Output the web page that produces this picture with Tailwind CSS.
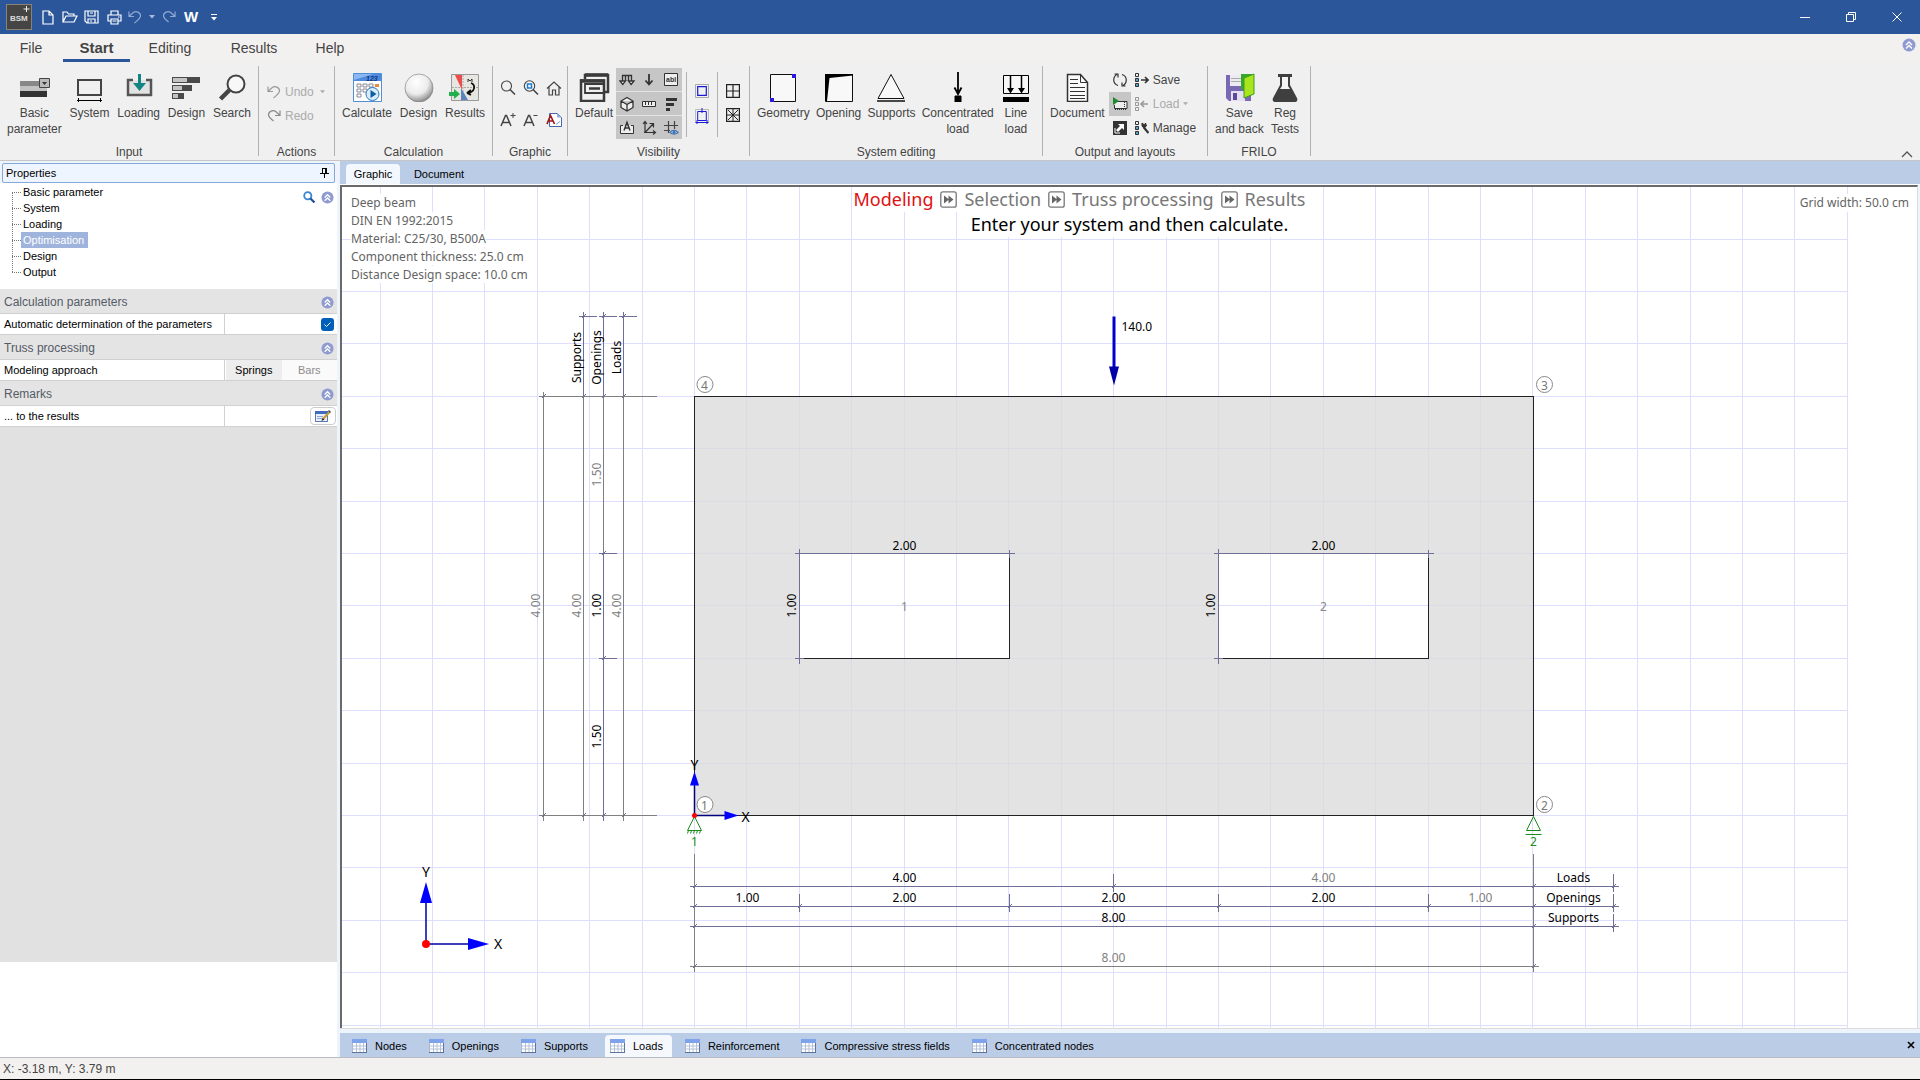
<!DOCTYPE html>
<html lang="en">
<head>
  <meta charset="UTF-8">
  <title>BSM+ Deep beam</title>
  <meta name="viewport" content="width=device-width, initial-scale=1.0">
  <script src="https://cdn.jsdelivr.net/npm/@tailwindcss/browser@4"></script>
</head>
<body class="h-screen flex flex-col overflow-hidden bg-[#f0f0f0] font-['Liberation_Sans',sans-serif] text-xs leading-4 text-[#444] cursor-default">

  <!-- shared icons -->
  <svg class="hidden">
    <symbol id="collapse" viewBox="0 0 14 14"><circle cx="7" cy="7" r="6.500" fill="#8f9bd0"/><path d="M4 7l3-3 3 3M4 10.500l3-3 3 3" fill="none" stroke="#fff" stroke-width="1.300"/></symbol>
    <symbol id="undo" viewBox="0 0 14 14"><path d="M1 1.500v5h5M1.500 6L5 2.800c3-2.300 7.500-.5 7.500 3 0 2.500-2 3.500-6 7.200" fill="none" stroke="currentColor" stroke-width="1.200"/></symbol>
    <symbol id="redo" viewBox="0 0 14 14"><path d="M13 1.500v5H8M12.500 6L9 2.800c-3-2.300-7.500-.5-7.500 3 0 2.500 2 3.500 5 6.200" fill="none" stroke="currentColor" stroke-width="1.200"/></symbol>
    <symbol id="caret" viewBox="0 0 6 4"><path d="M0 0h6L3 3.500z" fill="currentColor"/></symbol>
    <symbol id="grid-icon" viewBox="0 0 15 14"><path d="M.5.5h14v13H.5z" fill="#fff" stroke="#a9b8d4"/><path d="M0 0h15v4H0z" fill="#7fa3ea"/><path d="M1 7h13M1 10h13M4.500 4v9M8 4v9M11.500 4v9" stroke="#b4c1d8" fill="none"/><path d="M0 13.500h15M14.500 4v10" stroke="#5f749c"/></symbol>
    <symbol id="next-step" viewBox="0 0 17 17"><rect x=".8" y=".8" width="15.400" height="15.400" rx="2" fill="#fff" stroke="#777" stroke-width="1.300"/><path d="M4 4.500l5 4-5 4zM8.500 4.500l5 4-5 4z" fill="#666"/></symbol>
  </svg>

  <header>
    <div class="h-[34px] flex items-center bg-[#2b579a] text-white pl-[6px]">
      <svg class="w-[26px] h-[26px]" viewBox="0 0 26 26"><rect x=".5" y=".5" width="25" height="25" fill="#454545" stroke="#8a8378"/><text x="4" y="17" font-size="8" font-weight="bold" fill="#ddd">BSM</text><path d="M20.500 2v6M17.500 5h6" stroke="#eee"/></svg>
      <button class="ml-[10px]" aria-label="New"><svg class="w-3 h-[15px]" viewBox="0 0 12 15" fill="none" stroke="currentColor" stroke-width="1.200"><path d="M1 1h6l4 4v9H1zM7 1v4h4"/></svg></button>
      <button class="ml-2" aria-label="Open"><svg class="w-4 h-3" viewBox="0 0 16 12" fill="none" stroke="currentColor" stroke-width="1.200"><path d="M1 11V1h4l1.500 2H12v2M1 11l3-6h11l-3 6z"/></svg></button>
      <button class="ml-[6px]" aria-label="Save"><svg class="w-[15px] h-[14px]" viewBox="0 0 15 14" fill="none" stroke="currentColor" stroke-width="1.200"><path d="M1 1h13v12H3l-2-2zM4 1v5h7V1M4 13V9h7v4M6 3h3M6 11h2"/></svg></button>
      <button class="ml-2" aria-label="Print"><svg class="w-[15px] h-[15px]" viewBox="0 0 15 15" fill="none" stroke="currentColor" stroke-width="1.200"><path d="M4 5V1h7v4M4 11H1V5h13v6h-3M4 9h7v5H4zM5.500 11h4M11 7h1.500"/></svg></button>
      <button class="ml-[6px] text-[#8fa9d3]" aria-label="Undo"><svg class="w-[14px] h-[14px]"><use href="#undo"/></svg></button>
      <button class="ml-[7px] text-[#a9bcdc]" aria-label="Undo history"><svg class="w-[6px] h-1"><use href="#caret"/></svg></button>
      <button class="ml-[7px] text-[#8fa9d3]" aria-label="Redo"><svg class="w-[14px] h-[14px]"><use href="#redo"/></svg></button>
      <button class="ml-2 text-[15px] font-bold" aria-label="Word export">W</button>
      <button class="ml-[13px]" aria-label="Customize toolbar"><svg class="w-[6px] h-[7px]" viewBox="0 0 6 7"><path d="M0 .5h6" stroke="#fff"/><path d="M0 3h6L3 6.500z" fill="#fff"/></svg></button>
      <div class="ml-auto flex">
        <button class="w-[46px] h-[34px] flex items-center justify-center" aria-label="Minimize"><svg class="w-[10px] h-[10px]" viewBox="0 0 10 10"><path d="M0 5.500h10" stroke="#fff"/></svg></button>
        <button class="w-[46px] h-[34px] flex items-center justify-center" aria-label="Restore"><svg class="w-[10px] h-[10px]" viewBox="0 0 10 10" fill="none" stroke="#fff"><path d="M.5 2.500h7v7h-7zM2.500 2.500v-2h7v7h-2"/></svg></button>
        <button class="w-[46px] h-[34px] flex items-center justify-center" aria-label="Close"><svg class="w-[10px] h-[10px]" viewBox="0 0 10 10" stroke="#fff"><path d="M.5.500l9 9M9.500.500l-9 9"/></svg></button>
      </div>
    </div>

    <nav class="h-7 flex items-start bg-[#f3f1f0] text-sm pl-[5px] pr-1">
      <a href="#" class="w-[52px] h-7 leading-7 text-center">File</a>
      <a href="#" class="ml-[6px] w-[67px] h-7 leading-7 text-center text-[15px] font-bold border-b-3 border-[#2b579a]">Start</a>
      <a href="#" class="w-20 h-7 leading-7 text-center">Editing</a>
      <a href="#" class="w-[88px] h-7 leading-7 text-center">Results</a>
      <a href="#" class="w-[64px] h-7 leading-7 text-center">Help</a>
      <button class="ml-auto mt-1" aria-label="Info"><svg class="w-[14px] h-[14px]"><use href="#collapse"/></svg></button>
    </nav>

    <div class="h-[99px] flex border-b border-[#c6c6c6] bg-[#f0f0f0]">
      <!-- Input -->
      <section class="w-[258px] flex flex-col">
        <div class="flex-1 flex justify-between px-[7px] pt-2">
          <button class="flex flex-col items-center justify-start">
            <svg class="w-8 h-8 mb-[3px]" viewBox="0 0 32 32"><path d="M2 11h27v5H2z" fill="#888"/><path d="M2 16h27v5H2z" fill="#c2c2c2"/><path d="M2 21h27v6H2z" fill="#333"/><path d="M21.500 8.500h10v9h-10z" fill="#bbb" stroke="#444"/><path d="M24 12h5l-2.500 3z" fill="#333"/></svg>
            <span>Basic<br>parameter</span>
          </button>
          <button class="flex flex-col items-center justify-start">
            <svg class="w-8 h-8 mb-[3px]" viewBox="0 0 32 32" fill="none" stroke="#444"><path d="M5 10h23v15H5z" stroke-width="2"/><path d="M4 30.500h25M5.500 28v4M27.500 28v4" stroke="#000"/></svg>
            <span>System</span>
          </button>
          <button class="flex flex-col items-center justify-start">
            <svg class="w-8 h-8 mb-[3px]" viewBox="0 0 32 32"><path d="M10 10H5v15h23V10h-5" fill="#e2e2e2" stroke="#555" stroke-width="2.500"/><path d="M15 4h3v9h5l-6.500 8L10 13h5z" fill="#128484"/></svg>
            <span>Loading</span>
          </button>
          <button class="flex flex-col items-center justify-start">
            <svg class="w-8 h-8 mb-[3px]" viewBox="0 0 32 32"><path d="M2 7h28v6H2zM2 15h20v6H2zM2 23h12v6H2z" fill="#4a4a4a"/><path d="M3 8h14v4H3zM3 16h9v4H3zM3 24h5v4H3z" fill="#c4c4c4"/></svg>
            <span>Design</span>
          </button>
          <button class="flex flex-col items-center justify-start">
            <svg class="w-8 h-8 mb-[3px]" viewBox="0 0 32 32" fill="none" stroke="#444"><circle cx="20" cy="14" r="8.500" fill="#f8f8f8" stroke-width="2"/><path d="M4.500 29l9-9" stroke-width="4.500"/></svg>
            <span>Search</span>
          </button>
        </div>
        <h2 class="text-center">Input</h2>
      </section>
      <div class="w-px my-1 bg-[#b1b1b1]"></div>

      <!-- Actions -->
      <section class="w-[75px] flex flex-col">
        <div class="flex-1 flex flex-col gap-2 pl-2 pt-[22px] text-[#ababab]">
          <button class="flex items-center"><svg class="w-[14px] h-[14px] mr-1 text-[#999]"><use href="#undo"/></svg>Undo<svg class="w-[5px] h-1 ml-[6px]"><use href="#caret"/></svg></button>
          <button class="flex items-center"><svg class="w-[14px] h-[14px] mr-1 text-[#888]"><use href="#redo"/></svg>Redo</button>
        </div>
        <h2 class="text-center">Actions</h2>
      </section>
      <div class="w-px my-1 bg-[#b1b1b1]"></div>

      <!-- Calculation -->
      <section class="w-[157px] flex flex-col">
        <div class="flex-1 flex justify-between px-[7px] pt-2">
          <button class="flex flex-col items-center justify-start">
            <svg class="w-8 h-8 mb-[3px]" viewBox="0 0 32 32"><path d="M2.500 3.500h28v28h-28z" fill="#fff" stroke="#4f8fd6"/><path d="M3 4h27v7H3z" fill="#4d8ae0"/><path d="M3 10L22 4H3z" fill="#8bb8f2"/><text x="15" y="10.500" font-size="7" font-style="italic" font-weight="bold" fill="#123a7a">123</text><path d="M6 14h4v3H6zM12 14h4v3h-4zM18 14h4v3h-4zM6 19h4v3H6zM12 19h4v3h-4zM6 24h4v3H6z" fill="#fff" stroke="#889"/><path d="M24 14h4v3h-4z" fill="#e88a3a"/><circle cx="21.500" cy="24" r="6.500" fill="#d8ecfb" stroke="#2a77b8"/><path d="M19.500 20l6 4-6 4z" fill="#0f5c9e"/></svg>
            <span>Calculate</span>
          </button>
          <button class="flex flex-col items-center justify-start">
            <svg class="w-8 h-8 mb-[3px]" viewBox="0 0 32 32"><defs><radialGradient id="ball" cx=".4" cy=".3" r=".7"><stop offset="0" stop-color="#fff"/><stop offset=".6" stop-color="#ececec"/><stop offset="1" stop-color="#8e8e8e"/></radialGradient></defs><circle cx="16" cy="18" r="14" fill="url(#ball)" stroke="#777" stroke-width=".6"/></svg>
            <span>Design</span>
          </button>
          <button class="flex flex-col items-center justify-start">
            <svg class="w-8 h-8 mb-[3px]" viewBox="0 0 32 32"><path d="M2.500 4.500h27v26h-27z" fill="#e8e6e1" stroke="#999"/><path d="M3 17.500h26M14 5v25" stroke="#aaa" stroke-dasharray="2 1"/><path d="M6 5h7v15z" fill="#f04b4b"/><path d="M12 18l7 12h-7z" fill="#5a84bb"/><path d="M22 13c5 2 4 9-3 10M18 23l4-3M18 23l4 2" fill="none" stroke="#111" stroke-width="1.800"/><path d="M19 12V9l2 2 2-2v3" fill="none" stroke="#333"/><path d="M0 22h5v-3l6 5-6 5v-3H0z" fill="#22b04c"/></svg>
            <span>Results</span>
          </button>
        </div>
        <h2 class="text-center">Calculation</h2>
      </section>
      <div class="w-px my-1 bg-[#b1b1b1]"></div>

      <!-- Graphic -->
      <section class="w-[74px] flex flex-col">
        <div class="flex-1 grid grid-cols-3 content-start gap-x-[6px] gap-y-4 pl-[7px] pr-1 pt-[18px]">
          <button aria-label="Zoom"><svg class="w-4 h-4" viewBox="0 0 16 16" fill="none" stroke="#444"><circle cx="6.500" cy="6" r="5" stroke-width="1.100"/><path d="M10 9.500l5 5" stroke-width="1.600"/></svg></button>
          <button aria-label="Zoom window"><svg class="w-4 h-4" viewBox="0 0 16 16" fill="none" stroke="#444"><circle cx="6.500" cy="6" r="5.200" stroke-width="1.100"/><path d="M10 9.500l5 5" stroke-width="1.600"/><path d="M4.500 4h4v4h-4z" stroke="#1b7fd1" stroke-width="1.400"/></svg></button>
          <button aria-label="Home view"><svg class="w-4 h-4" viewBox="0 0 16 16" fill="none" stroke="#444" stroke-width="1.200"><path d="M1 8.500L8 2l7 6.500M3 7v8h3.500v-5h3v5H13V7"/></svg></button>
          <button aria-label="Larger text"><svg class="w-4 h-4" viewBox="0 0 16 16" fill="none" stroke="#444"><path d="M1 14L5.500 3.500h1L11 14M3 10.500h6" stroke-width="1.500"/><path d="M10.500 3.500h5M13 1v5"/></svg></button>
          <button aria-label="Smaller text"><svg class="w-4 h-4" viewBox="0 0 16 16" fill="none" stroke="#444"><path d="M1 14L5.500 3.500h1L11 14M3 10.500h6" stroke-width="1.500"/><path d="M10.500 3.500h4"/></svg></button>
          <button aria-label="Font"><svg class="w-4 h-4" viewBox="0 0 16 16" fill="none"><path d="M3.500 1.500h8l4 4v9h-12z" fill="#fff" stroke="#4468a8"/><path d="M11 1l4.500 4.500H11z" fill="#8fb0e8"/><path d="M1 12L4.500 3.500 8.500 12M2.500 9h5" stroke="#a01818" stroke-width="1.700"/><path d="M10 12.500l4-3" stroke="#7a9bdc"/></svg></button>
        </div>
        <h2 class="text-center">Graphic</h2>
      </section>
      <div class="w-px my-1 bg-[#b1b1b1]"></div>

      <!-- Visibility -->
      <section class="w-[181px] flex flex-col">
        <div class="flex-1 flex">
          <button class="flex flex-col items-center justify-start pt-2 pl-[7px]">
            <svg class="w-8 h-8 mb-[3px]" viewBox="0 0 32 32" fill="none" stroke="#3b3b3b" stroke-width="2.500"><path d="M7 9V5h23v17h-4M3 10.500h23V31H3z"/><path d="M2 11h25M7 5h23" stroke-width="3.500"/><path d="M7 14h19v9H7z" stroke-width="1.800"/><path d="M11 18.500h11"/></svg>
            <span>Default</span>
          </button>
          <div class="ml-[3px] mt-[6px] w-[66px] h-[71px] grid grid-cols-3 grid-rows-3 gap-y-px bg-[#e4e4e4] shrink-0">
            <button class="bg-[#c6c6c6] flex items-center justify-center" aria-label="Supports"><svg class="w-4 h-4" viewBox="0 0 16 16" fill="none" stroke="#333" stroke-width="1.300"><path d="M3.500 9V3.500h9V9M6.500 9V3.500M9.500 9V3.500"/><path d="M3.800 12.500L1 9h5.500zM12.200 12.500L9.500 9H15z" fill="#fff"/></svg></button>
            <button class="bg-[#c6c6c6] flex items-center justify-center" aria-label="Loads"><svg class="w-4 h-4" viewBox="0 0 16 16" fill="none" stroke="#333" stroke-width="1.800"><path d="M8 2v10M4.500 8.500L8 12.500l3.500-4"/></svg></button>
            <button class="bg-[#c6c6c6] flex items-center justify-center" aria-label="Labels"><svg class="w-[14px] h-[13px]" viewBox="0 0 14 13"><path d="M.5.5h13v12H.5z" fill="#eee" stroke="#333"/><text x="2" y="9" font-size="7" font-weight="bold" fill="#333">abl</text></svg></button>
            <button class="bg-[#c6c6c6] flex items-center justify-center" aria-label="3D"><svg class="w-4 h-4" viewBox="0 0 16 16" fill="#eee" stroke="#333" stroke-width="1.300"><path d="M8 1.500l6 3.500v6.500l-6 3.500-6-3.500V5zM2 5l6 3.500L14 5M8 8.500V15"/></svg></button>
            <button class="bg-[#c6c6c6] flex items-center justify-center" aria-label="Dimensions"><svg class="w-4 h-4" viewBox="0 0 16 16" fill="#eee" stroke="#333"><path d="M1.500 5.500h13v5h-13zM4.500 6v3M7.500 6v3M10.500 6v3"/></svg></button>
            <button class="bg-[#c6c6c6] flex items-center justify-center" aria-label="Layers"><svg class="w-4 h-4" viewBox="0 0 16 16" fill="#333"><path d="M3 2h11v3H3zM3 7h8v3H3zM3 12h4v3H3z"/></svg></button>
            <button class="bg-[#c6c6c6] flex items-center justify-center" aria-label="Text frame"><svg class="w-4 h-4" viewBox="0 0 16 16" fill="none" stroke="#333"><path d="M4 5.500H1.500v8h13v-8H12" fill="#eee"/><path d="M5 10.500l3-8 3 8M6 8h4" stroke-width="1.500"/></svg></button>
            <button class="bg-[#c6c6c6] flex items-center justify-center" aria-label="Axes"><svg class="w-4 h-4" viewBox="0 0 16 16" fill="none" stroke="#333" stroke-width="1.200"><path d="M4 13V2M2 4l2-2.500L6 4M3 12.500h11M12 10.500l2.500 2-2.500 2M4 12.500L12 4M8.500 3.500H12.500V7.500"/></svg></button>
            <button class="bg-[#c6c6c6] flex items-center justify-center" aria-label="Grid"><svg class="w-4 h-4" viewBox="0 0 16 16" fill="none" stroke="#444" stroke-width="1.200"><path d="M5.500 1v12M11.500 1v8M1 5.500h14M1 10.500h6"/><path d="M7 12.500c3-3 5-3 8 0-3 2.500-5 2.500-8 0z" fill="#cfe0f5" stroke="#3d6fb0"/><circle cx="11" cy="12.300" r="1.500" fill="#3d6fb0" stroke="none"/></svg></button>
          </div>
          <div class="ml-1 mt-[10px] mb-[7px] w-px bg-[#b1b1b1]"></div>
          <div class="flex flex-col gap-[10px] pt-[22px] px-2">
            <button aria-label="Outline"><svg class="w-[14px] h-[14px]" viewBox="0 0 14 14" fill="none"><path d="M.5.5h13v13H.5z" stroke="#aaa"/><path d="M2.700 2.700h8.600v8.600H2.700z" stroke="#1a1ad8" stroke-width="1.200"/></svg></button>
            <button aria-label="Outline with dimensions"><svg class="w-[14px] h-4" viewBox="0 0 14 16" fill="none"><path d="M.5 1.500h13v13H.5z" stroke="#bbb"/><path d="M2.700 3.500h8.600v9H2.700zM7 0v5M.500 14.500h13M2 12v4M12 12v4M5 3.500h4" stroke="#1a1ad8"/></svg></button>
          </div>
          <div class="mt-[10px] mb-[7px] w-px bg-[#b1b1b1]"></div>
          <div class="flex flex-col gap-[10px] pt-[22px] pl-2">
            <button aria-label="Split view"><svg class="w-[14px] h-[14px]" viewBox="0 0 14 14" fill="none" stroke="#222"><path d="M.6.600h12.800v12.800H.6zM7 1v12M1 7h12" stroke-width="1.200"/></svg></button>
            <button aria-label="Mesh view"><svg class="w-[14px] h-[14px]" viewBox="0 0 14 14" fill="none" stroke="#222"><path d="M.6.600h12.800v12.800H.6z" stroke-width="1.200"/><path d="M7 1v12M1 7h12M2 2l10 10M12 2L2 12"/></svg></button>
          </div>
        </div>
        <h2 class="text-center">Visibility</h2>
      </section>
      <div class="w-px my-1 bg-[#b1b1b1]"></div>

      <!-- System editing -->
      <section class="w-[292px] flex flex-col">
        <div class="flex-1 flex justify-between pl-[7px] pr-[10px] pt-2">
          <button class="flex flex-col items-center justify-start">
            <svg class="w-8 h-8 mb-[3px]" viewBox="0 0 32 32"><path d="M3.500 4.500h25v27h-25z" fill="#f8f8f8" stroke="#111"/><path d="M25 4h4v4h-4zM3 28h4v4H3z" fill="#2b1be0"/></svg>
            <span>Geometry</span>
          </button>
          <button class="flex flex-col items-center justify-start">
            <svg class="w-8 h-8 mb-[3px]" viewBox="0 0 32 32"><path d="M2.500 4.500h27v27h-27z" fill="#f8f8f8" stroke="#111"/><path d="M2 4h28v1.500L6.500 8 4 31H2z"/></svg>
            <span>Opening</span>
          </button>
          <button class="flex flex-col items-center justify-start">
            <svg class="w-8 h-8 mb-[3px]" viewBox="0 0 32 32" fill="none" stroke="#111"><path d="M16 4.500L29 28.500H3z" fill="#f8f8f8"/><path d="M2 31h28" stroke-width="1.500"/></svg>
            <span>Supports</span>
          </button>
          <button class="flex flex-col items-center justify-start">
            <svg class="w-8 h-8 mb-[3px]" viewBox="0 0 32 32" fill="none" stroke="#000"><path d="M16 2v21M12.500 17.500L16 24l3.500-6.500" stroke-width="1.800"/><path d="M13 26h6v6h-6z" fill="#000"/></svg>
            <span>Concentrated<br>load</span>
          </button>
          <button class="flex flex-col items-center justify-start">
            <svg class="w-8 h-8 mb-[3px]" viewBox="0 0 32 32"><path d="M3.500 5.500h25v18h-25z" fill="#f8f8f8" stroke="#000"/><path d="M10.500 5v14M21.500 5v14" stroke="#000" stroke-width="1.500"/><path d="M7 18h7l-3.500 5.500zM18 18h7l-3.500 5.500zM3 27h26v5H3z"/></svg>
            <span>Line<br>load</span>
          </button>
        </div>
        <h2 class="text-center">System editing</h2>
      </section>
      <div class="w-px my-1 bg-[#b1b1b1]"></div>

      <!-- Output and layouts -->
      <section class="w-[164px] flex flex-col">
        <div class="flex-1 flex pl-[7px]">
          <button class="flex flex-col items-center justify-start pt-2">
            <svg class="w-8 h-8 mb-[3px]" viewBox="0 0 32 32" fill="none" stroke="#333"><path d="M6.500 4.500h13l7 8v19h-20z" fill="#fafafa" stroke-width="1.500"/><path d="M19.500 4.500v8h7M9 9.500h8M9 13.500h8M9 17.500h15M9 21.500h15M9 25.500h15M9 28.500h15"/></svg>
            <span>Document</span>
          </button>
          <div class="ml-1 pt-[6px] flex flex-col">
            <button class="w-[22px] h-6 flex items-center justify-center" aria-label="Refresh"><svg class="w-4 h-4" viewBox="0 0 16 16" fill="none" stroke="#333" stroke-width="1.200"><path d="M10 2.500c6 2 5 9 1 11M6 13.500C0 11.500 1 4.500 5 2.500M2.500 2H6v3.500M13.500 14H10v-3.500"/></svg></button>
            <button class="w-[22px] h-6 flex items-center justify-center bg-[#c6c6c6]" aria-label="Preview"><svg class="w-4 h-4" viewBox="0 0 16 16" fill="none" stroke="#333"><path d="M5 5.500h10v7H2.500V9" fill="#eee"/><path d="M12.500 6v6M3 13.500h12" stroke-dasharray="1 1"/><path d="M1 1l6 4-6 4z" fill="#1d8a2e" stroke="none"/></svg></button>
            <button class="w-[22px] h-6 flex items-center justify-center" aria-label="Pop out"><svg class="w-[14px] h-[14px]" viewBox="0 0 14 14"><path d="M0 0h14v14H0z" fill="#333"/><path d="M5 3h6v6L9 7l-4 4-2-2 4-4z" fill="#fff"/><path d="M2 7v5h5" stroke="#fff" fill="none"/></svg></button>
          </div>
          <div class="pt-[6px] pl-1 flex flex-col">
            <button class="h-6 flex items-center gap-1"><svg class="w-[14px] h-[14px]" viewBox="0 0 14 14" fill="none" stroke="#333"><path d="M.5.5h3v3h-3z"/><path d="M.5 5.500h3v3h-3zM.5 10.500h3v3h-3z" fill="#58a4c8"/><path d="M6 7h7M10 4l3 3-3 3" stroke-width="1.600"/></svg>Save</button>
            <button class="h-6 flex items-center gap-1 text-[#ababab]"><svg class="w-[14px] h-[14px]" viewBox="0 0 14 14" fill="none" stroke="#999"><path d="M.5.5h3v3h-3zM.5 5.500h3v3h-3zM.5 10.500h3v3h-3z"/><path d="M6 7h7M9 4L6 7l3 3" stroke-width="1.600"/></svg>Load<svg class="w-[5px] h-1"><use href="#caret"/></svg></button>
            <button class="h-6 flex items-center gap-1"><svg class="w-[14px] h-[14px]" viewBox="0 0 14 14" fill="none" stroke="#333"><path d="M.5.5h3v3h-3z"/><path d="M.5 5.500h3v3h-3zM.5 10.500h3v3h-3z" fill="#58a4c8"/><path d="M8.500 6l5 6" stroke-width="2.200"/><path d="M7 2v3l2 2 2.500-2-1-3-1 2z" fill="#333"/></svg>Manage</button>
          </div>
        </div>
        <h2 class="text-center">Output and layouts</h2>
      </section>
      <div class="w-px my-1 bg-[#b1b1b1]"></div>

      <!-- FRILO -->
      <section class="w-[102px] flex flex-col">
        <div class="flex-1 flex justify-between pl-[7px] pr-[9px] pt-2">
          <button class="flex flex-col items-center justify-start">
            <svg class="w-8 h-8 mb-[3px]" viewBox="0 0 32 32"><path d="M3 5h25v26H6l-3-3z" fill="#7b68b5"/><path d="M7 5h12v11H7z" fill="#eceaf2"/><path d="M8 8.500h10M8 11.500h10" stroke="#aaa"/><path d="M8 21h14v10H8z" fill="#e4e0ef"/><path d="M10 23h4v7h-4z" fill="#5d4a9c"/><path d="M18 4h13v19l-13-4z" fill="#37a82c"/><path d="M21 8l10-4v20l-10 4z" fill="#a8e51c"/><path d="M21 8l10-4v20l-10 4z" fill="none" stroke="#3e9c20"/></svg>
            <span>Save<br>and back</span>
          </button>
          <button class="flex flex-col items-center justify-start">
            <svg class="w-8 h-8 mb-[3px]" viewBox="0 0 32 32"><path d="M9 4h14v3h-2v8l7 13c1 2 0 4-2 4H6c-2 0-3-2-2-4l7-13V7H9z" fill="#3f3f3f"/><path d="M13 7h6v9l2 3H11l2-3z" fill="#f4f4f4"/></svg>
            <span>Reg<br>Tests</span>
          </button>
        </div>
        <h2 class="text-center">FRILO</h2>
      </section>
      <div class="w-px my-1 bg-[#b1b1b1]"></div>
      <button class="ml-auto mr-[7px] mb-[2px] self-end" aria-label="Collapse ribbon"><svg class="w-3 h-[7px]" viewBox="0 0 12 7" fill="none" stroke="#555" stroke-width="1.300"><path d="M1 6l5-5 5 5"/></svg></button>
    </div>
  </header>

  <div class="flex-1 flex min-h-0 bg-[#eef4fc] text-[11px] text-black">
    <!-- Properties -->
    <aside class="w-[337px] mr-[3px] flex flex-col shrink-0">
      <div class="mt-[2px] mx-[2px] h-5 px-[3px] flex items-center justify-between border border-[#86a8d8] rounded-xs bg-[#eef5fe]">
        <h1>Properties</h1>
        <button class="mr-[2px]" aria-label="Pin"><svg class="w-[9px] h-[10px]" viewBox="0 0 9 10" fill="none" stroke="#000"><path d="M2.500 0v5.500M6 0v5.500M2 .5h5M0 5.500h9M4.500 6v4"/><path d="M6 0v5.500" stroke-width="1.800"/></svg></button>
      </div>
      <div class="h-[106px] pt-px flex items-start bg-white">
        <ul class="relative pl-3">
          <li class="h-4 flex items-center"><span class="w-[9px] border-t border-dotted border-[#777]"></span><a href="#" class="px-[2px]">Basic parameter</a></li>
          <li class="h-4 flex items-center"><span class="w-[9px] border-t border-dotted border-[#777]"></span><a href="#" class="px-[2px]">System</a></li>
          <li class="h-4 flex items-center"><span class="w-[9px] border-t border-dotted border-[#777]"></span><a href="#" class="px-[2px]">Loading</a></li>
          <li class="h-4 flex items-center"><span class="w-[9px] border-t border-dotted border-[#777]"></span><a href="#" class="px-[2px] pr-1 bg-[#9fb4dc] text-white">Optimisation</a></li>
          <li class="h-4 flex items-center"><span class="w-[9px] border-t border-dotted border-[#777]"></span><a href="#" class="px-[2px]">Design</a></li>
          <li class="h-4 flex items-center"><span class="w-[9px] border-t border-dotted border-[#777]"></span><a href="#" class="px-[2px]">Output</a></li>
          <li class="absolute left-3 top-2 bottom-2 border-l border-dotted border-[#777]" aria-hidden="true"></li>
        </ul>
        <button class="ml-auto mt-[7px]" aria-label="Search properties"><svg class="w-3 h-3" viewBox="0 0 12 12" fill="none"><circle cx="4.800" cy="4.800" r="3.600" stroke="#3a86d4" stroke-width="1.800"/><path d="M7.500 7.500l4 4" stroke="#1f4f9c" stroke-width="2.200"/></svg></button>
        <button class="ml-[6px] mr-[3px] mt-[7px]" aria-label="Collapse all"><svg class="w-[13px] h-[13px]"><use href="#collapse"/></svg></button>
      </div>

      <div class="h-[25px] pl-1 pr-[3px] pt-[2px] flex items-center justify-between bg-[#e4e4e4] border-b border-[#d0d0d0] text-xs text-[#555b66]">
        <h2>Calculation parameters</h2>
        <button aria-label="Collapse"><svg class="w-[13px] h-[13px]"><use href="#collapse"/></svg></button>
      </div>
      <div class="h-[21px] flex bg-white border-b border-[#d0d0d0]">
        <label for="auto" class="w-[225px] pl-1 leading-5 border-r border-[#d0d0d0]">Automatic determination of the parameters</label>
        <div class="flex-1 flex items-center justify-end pr-[3px]">
          <input id="auto" type="checkbox" checked class="appearance-none w-[13px] h-[13px] rounded-[3px] bg-[#005fb8]">
          <svg class="w-[13px] h-[13px] -ml-[13px] pointer-events-none" viewBox="0 0 13 13" fill="none" stroke="#fff"><path d="M3.500 6.500l2 2 4-4"/></svg>
        </div>
      </div>

      <div class="h-[25px] pl-1 pr-[3px] pt-[2px] flex items-center justify-between bg-[#e4e4e4] border-b border-[#d0d0d0] text-xs text-[#555b66]">
        <h2>Truss processing</h2>
        <button aria-label="Collapse"><svg class="w-[13px] h-[13px]"><use href="#collapse"/></svg></button>
      </div>
      <div class="h-[21px] flex bg-white border-b border-[#d0d0d0]">
        <div class="w-[225px] pl-1 leading-5 border-r border-[#d0d0d0]">Modeling approach</div>
        <button class="flex-1 bg-[#ededed] ml-px">Springs</button>
        <button class="flex-1 bg-[#fafafa] text-[#8c8c8c]">Bars</button>
      </div>

      <div class="h-[25px] pl-1 pr-[3px] pt-[2px] flex items-center justify-between bg-[#e4e4e4] border-b border-[#d0d0d0] text-xs text-[#555b66]">
        <h2>Remarks</h2>
        <button aria-label="Collapse"><svg class="w-[13px] h-[13px]"><use href="#collapse"/></svg></button>
      </div>
      <div class="h-[21px] flex bg-white border-b border-[#d0d0d0]">
        <div class="w-[225px] pl-1 leading-5 border-r border-[#d0d0d0]">... to the results</div>
        <div class="flex-1 flex items-center justify-end pr-px">
          <button class="w-[26px] h-[18px] flex items-center justify-center bg-white border border-[#ccc] rounded-[4px]" aria-label="Edit remark"><svg class="w-4 h-[13px]" viewBox="0 0 16 13" fill="none"><path d="M.5 1.500h12v10H.5z" fill="#e8effa" stroke="#5b78a8"/><path d="M0 1h13v3H0z" fill="#3f6cc0"/><path d="M2 6.500h6M2 8.500h5" stroke="#8fa8d0"/><path d="M14.500 2L8 9" stroke="#c79a3c" stroke-width="2.200"/><path d="M6.500 11l1-3 2 1.500z" fill="#222"/><path d="M13.500.5l2 2" stroke="#444" stroke-width="1.500"/></svg></button>
        </div>
      </div>
      <div class="flex-1 bg-[#e1e1e1]"></div>
      <div class="h-[95px] bg-white"></div>
    </aside>

    <!-- Graphic view -->
    <main class="flex-1 flex flex-col min-w-0">
      <div class="h-6 flex items-end pl-[6px] bg-[#bacce6] border-b border-white">
        <button class="w-[54px] h-5 rounded-t-[4px] bg-[#f3f8fe]">Graphic</button>
        <button class="w-[78px] h-5">Document</button>
      </div>

      <div class="relative flex-1 min-h-0 mr-[2px] bg-white border-l-2 border-t-2 border-l-[#6a6a6a] border-t-[#6a6a6a] border-r border-r-[#dcdcdc] overflow-hidden">
        <svg class="absolute inset-0 w-full h-full font-['Noto_Sans',sans-serif] text-xs" id="drawing">
          <!-- origin is node 1, one metre is 104.8 px -->
          <g transform="translate(352.500 628.500)">
            <g id="grid" stroke="#dedeff" shape-rendering="crispEdges"></g>

            <path d="M0 0V-419H839V0z" fill="#dadada" fill-opacity=".75"/>
            <g stroke="#dedeff" shape-rendering="crispEdges" id="holes"></g>
            <path d="M0 0V-419H839V0z" fill="none" stroke="#222" shape-rendering="crispEdges"/>

            <!-- load -->
            <path d="M419.500-499v52" stroke="#0000cd" stroke-width="3"/>
            <path d="M414.500-449h10l-5 19z" fill="#0000a8"/>
            <text x="427" y="-485">140.0</text>

            <g id="dims" fill="none" shape-rendering="crispEdges"></g>
            <g id="labels" text-anchor="middle"></g>

            <!-- nodes -->
            <g fill="none" stroke="#888"><circle cx="10.500" cy="-11" r="8" fill="#fff"/><circle cx="850" cy="-11" r="8"/><circle cx="850" cy="-431" r="8"/><circle cx="10.500" cy="-431" r="8"/></g>
            <g text-anchor="middle" fill="#777"><text x="10" y="-6">1</text><text x="850" y="-6">2</text><text x="850" y="-426">3</text><text x="10" y="-426">4</text></g>

            <!-- supports -->
            <g fill="none" stroke="#1a8c1a"><path d="M0 1l-7 14H7zM-6 15l-1 3M-3 15l-1 3M0 15l-1 3M3 15l-1 3M6 15l-1 3"/><path d="M839 1l-7 14h14zM831 19h16"/></g>
            <g text-anchor="middle" fill="#1a8c1a"><text x="0" y="30">1</text><text x="839" y="30">2</text></g>

            <!-- local axes -->
            <path d="M0-30V0H32" fill="none" stroke="#000080" stroke-width="1.500"/>
            <path d="M-4.500-30h9L0-44zM30-4.500v9L44 0z" fill="#0000ff"/>
            <circle r="2.500" fill="#f00"/>
            <g text-anchor="middle" class="text-sm"><text x="0" y="-46">Y</text><text x="51" y="6">X</text></g>
          </g>

          <!-- view axes -->
          <g transform="translate(84 757)">
            <path d="M0-41V0H42" fill="none" stroke="#0000a0" stroke-width="1.500"/>
            <path d="M-6-41H6L0-62zM42-6V6l21-6z" fill="#0000ff"/>
            <circle r="4" fill="#f00"/>
            <g text-anchor="middle" class="text-sm"><text x="0" y="-67">Y</text><text x="72" y="5">X</text></g>
          </g>
        </svg>

        <div class="absolute left-[9px] top-[7px] font-['Noto_Sans',sans-serif] text-xs leading-[18px] text-[#646464]">
          <p><span class="bg-white">Deep beam</span></p>
          <p><span class="bg-white">DIN EN 1992:2015</span></p>
          <p><span class="bg-white">Material: C25/30, B500A</span></p>
          <p><span class="bg-white">Component thickness: 25.0 cm</span></p>
          <p><span class="bg-white">Distance Design space: 10.0 cm</span></p>
        </div>
        <div class="absolute right-2 top-[7px] font-['Noto_Sans',sans-serif] text-xs leading-[18px] text-[#646464] bg-white">Grid width: 50.0 cm</div>

        <div class="absolute inset-x-0 top-0 flex flex-col items-center font-['Noto_Sans',sans-serif] text-lg leading-[25px]">
          <div class="flex items-center gap-[7px] mr-[100px] bg-white text-[#777]">
            <span class="text-[#e01010]">Modeling</span>
            <svg class="w-[17px] h-[17px]"><use href="#next-step"/></svg>
            <span>Selection</span>
            <svg class="w-[17px] h-[17px]"><use href="#next-step"/></svg>
            <span>Truss processing</span>
            <svg class="w-[17px] h-[17px]"><use href="#next-step"/></svg>
            <span>Results</span>
          </div>
          <p class="bg-white">Enter your system and then calculate.</p>
        </div>
      </div>

      <div class="h-[5px] border-t border-[#dcdcdc]"></div>
      <div class="h-6 flex items-end gap-2 pl-[7px] pr-1 bg-[#bacce6]">
        <button class="h-[22px] flex items-center gap-2 pb-px pl-[5px] pr-[9px]"><svg class="w-[15px] h-[14px]"><use href="#grid-icon"/></svg>Nodes</button>
        <button class="h-[22px] flex items-center gap-2 pb-px pl-[5px] pr-[9px]"><svg class="w-[15px] h-[14px]"><use href="#grid-icon"/></svg>Openings</button>
        <button class="h-[22px] flex items-center gap-2 pb-px pl-[5px] pr-[9px]"><svg class="w-[15px] h-[14px]"><use href="#grid-icon"/></svg>Supports</button>
        <button class="h-[22px] flex items-center gap-2 pb-px pl-[5px] pr-[9px] rounded-t-[4px] bg-[#f5f9fe]"><svg class="w-[15px] h-[14px]"><use href="#grid-icon"/></svg>Loads</button>
        <button class="h-[22px] flex items-center gap-2 pb-px pl-[5px] pr-[9px]"><svg class="w-[15px] h-[14px]"><use href="#grid-icon"/></svg>Reinforcement</button>
        <button class="h-[22px] flex items-center gap-2 pb-px pl-[5px] pr-[9px]"><svg class="w-[15px] h-[14px]"><use href="#grid-icon"/></svg>Compressive stress fields</button>
        <button class="h-[22px] flex items-center gap-2 pb-px pl-[5px] pr-[9px]"><svg class="w-[15px] h-[14px]"><use href="#grid-icon"/></svg>Concentrated nodes</button>
        <button class="ml-auto mr-px mb-2" aria-label="Close table"><svg class="w-2 h-2" viewBox="0 0 8 8" stroke="#000" stroke-width="1.600"><path d="M1 1l6 6M7 1L1 7"/></svg></button>
      </div>
    </main>
  </div>

  <footer class="h-[23px] pl-[3px] flex items-center bg-[#f3f1f0] border-t border-t-[#b9bcc4] border-b border-b-black">X: -3.18 m, Y: 3.79 m</footer>

  <script>
    const NS = "http://www.w3.org/2000/svg";
    const STEP = 52.4;
    const BLUE = "#6e6e96";
    const GREY = "#808080";

    function add(parent, tag, attrs, text) {
      const el = document.createElementNS(NS, tag);
      for (const k in attrs) el.setAttribute(k, attrs[k]);
      if (text) el.textContent = text;
      document.getElementById(parent).appendChild(el);
    }

    function line(x1, y1, x2, y2, stroke) {
      add("dims", "path", { d: `M${x1} ${y1}L${x2} ${y2}`, stroke });
    }

    function label(x, y, text, fill, rotated) {
      const attrs = { x, y: y + 4, fill };
      if (rotated) attrs.transform = `rotate(-90 ${x} ${y})`;
      add("labels", "text", attrs, text);
    }

    // background grid
    for (let i = -6; i <= 22; i++) {
      const x = Math.round(i * STEP);
      add("grid", "path", { d: `M${x} -629V213` });
    }
    for (let i = -4; i <= 11; i++) {
      const y = Math.round(-i * STEP);
      add("grid", "path", { d: `M-354 ${y}H1153` });
    }

    // openings
    [[105, "1"], [524, "2"]].forEach(([x, nr]) => {
      add("holes", "path", { d: `M${x} -262h210v105h-210z`, fill: "#fff", stroke: "none" });
      [1, 2, 3].forEach(i => add("holes", "path", { d: `M${x + Math.round(i * STEP)} -262v105` }));
      add("holes", "path", { d: `M${x} -210h210` });
      add("holes", "path", { d: `M${x} -157h210v-105`, fill: "none", stroke: "#222" });
      line(x - 5, -262, x + 215, -262, BLUE);
      line(x, -267, x, -152, BLUE);
      line(x + 210, -266, x + 210, -258, BLUE);
      line(x - 5, -157, x + 4, -157, BLUE);
      label(x + 105, -270, "2.00", "#000");
      label(x - 8, -210, "1.00", "#000", true);
      label(x + 105, -209, nr, "#888");
    });

    // dimension chains on the left
    line(-156, -419, -38, -419, GREY);
    line(-156, 0, -38, 0, GREY);
    line(-151, -424, -151, 5, GREY);
    [-111, -91, -71].forEach(x => {
      line(x, -504, x, -419, BLUE);
      line(x, -419, x, 5, GREY);
      line(x - 5, -499, x + 13, -499, BLUE);
    });
    line(-91, -262, -91, 5, BLUE);
    line(-96, -262, -78, -262, BLUE);
    line(-96, -157, -78, -157, BLUE);
    label(-118, -458, "Supports", "#000", true);
    label(-98, -458, "Openings", "#000", true);
    label(-78, -458, "Loads", "#000", true);
    label(-159, -210, "4.00", GREY, true);
    label(-118, -210, "4.00", GREY, true);
    label(-78, -210, "4.00", GREY, true);
    label(-98, -341, "1.50", GREY, true);
    label(-98, -210, "1.00", "#000", true);
    label(-98, -79, "1.50", "#000", true);

    // dimension chains below
    [0, 839].forEach(x => line(x, 38, x, 156, GREY));
    [71, 91, 111].forEach(y => {
      line(-5, y, 924, y, BLUE);
      line(919, y - 13, 919, y + 5, BLUE);
    });
    line(-5, 151, 844, 151, GREY);
    line(419, 58, 419, 76, BLUE);
    [105, 315, 524, 734].forEach(x => line(x, 78, x, 96, BLUE));
    label(210, 62, "4.00", "#000");
    label(629, 62, "4.00", GREY);
    label(53, 82, "1.00", "#000");
    label(210, 82, "2.00", "#000");
    label(419, 82, "2.00", "#000");
    label(629, 82, "2.00", "#000");
    label(786, 82, "1.00", GREY);
    label(419, 102, "8.00", "#000");
    label(419, 142, "8.00", GREY);
    label(879, 62, "Loads", "#000");
    label(879, 82, "Openings", "#000");
    label(879, 102, "Supports", "#000");

    // slashes where dimension lines end
    const ends = [[0, 71], [419, 71], [839, 71], [919, 71], [0, 91], [105, 91], [315, 91], [524, 91], [734, 91], [839, 91], [919, 91],
      [0, 111], [839, 111], [919, 111], [0, 151], [839, 151], [-151, 0], [-111, 0], [-91, 0], [-71, 0], [-151, -419], [-111, -419],
      [-91, -419], [-71, -419], [-111, -499], [-91, -499], [-71, -499], [-91, -262], [-91, -157]];
    ends.forEach(([x, y]) => line(x - 2, y + 2, x + 2, y - 2, BLUE));
  </script>
</body>
</html>
